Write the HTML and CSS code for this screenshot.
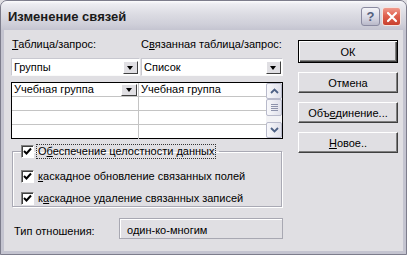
FILE: index.html
```html
<!DOCTYPE html>
<html lang="ru">
<head>
    <meta charset="UTF-8">
    <title>Изменение связей</title>
    <link rel="stylesheet" href="styles.css">
</head>
<body>
    <div class="window">
        <div class="titlebar">
            <span class="title">Изменение связей</span>
            <span class="cap-btn help">?</span>
            <span class="cap-btn close">
                <svg width="12" height="12" viewBox="0 0 12 12"><path d="M2 2 L10 10 M10 2 L2 10" stroke="#fff" stroke-width="2.2" stroke-linecap="round"/></svg>
            </span>
        </div>

        <div class="client">
            <div class="main">
                <div class="left">
                    <div class="labels">
                        <span class="lbl-a"><u>Т</u>аблица/запрос:</span>
                        <span>С<u>в</u>язанная таблица/запрос:</span>
                    </div>

                    <div class="combos">
                        <div class="combo c1"><span class="val">Группы</span><span class="drop"></span></div>
                        <div class="combo c2"><span class="val">Список</span><span class="drop"></span></div>
                    </div>

                    <div class="grid">
                        <div class="rows">
                            <div class="row">
                                <div class="cell c-left">Учебная группа<span class="drop small"></span></div>
                                <div class="cell">Учебная группа</div>
                            </div>
                            <div class="row"><div class="cell c-left"></div><div class="cell"></div></div>
                            <div class="row"><div class="cell c-left"></div><div class="cell"></div></div>
                            <div class="row"><div class="cell c-left"></div><div class="cell"></div></div>
                        </div>
                        <div class="scrollbar">
                            <span class="sb-btn"><svg width="9" height="6" viewBox="0 0 9 6"><path d="M1 5 L4.5 1.5 L8 5" fill="none" stroke="#4d6185" stroke-width="1.8"/></svg></span>
                            <span class="sb-thumb"><i></i><i></i><i></i><i></i></span>
                            <span class="sb-track"></span>
                            <span class="sb-btn"><svg width="9" height="6" viewBox="0 0 9 6"><path d="M1 1 L4.5 4.5 L8 1" fill="none" stroke="#4d6185" stroke-width="1.8"/></svg></span>
                        </div>
                    </div>

                    <fieldset class="group">
                        <legend class="check-row">
                            <span class="check"><svg width="9" height="9" viewBox="0 0 9 9"><path d="M1 4 L3.5 6.5 L8 1.5" fill="none" stroke="#000" stroke-width="2"/></svg></span>
                            <span class="focus">О<u>б</u>еспечение целостности данных</span>
                        </legend>
                        <div class="check-row r2">
                            <span class="check"><svg width="9" height="9" viewBox="0 0 9 9"><path d="M1 4 L3.5 6.5 L8 1.5" fill="none" stroke="#000" stroke-width="2"/></svg></span>
                            <span class="text"><u>к</u>аскадное обновление связанных полей</span>
                        </div>
                        <div class="check-row r3">
                            <span class="check"><svg width="9" height="9" viewBox="0 0 9 9"><path d="M1 4 L3.5 6.5 L8 1.5" fill="none" stroke="#000" stroke-width="2"/></svg></span>
                            <span class="text">к<u>а</u>скадное удаление связанных записей</span>
                        </div>
                    </fieldset>
                </div>

                <div class="buttons">
                    <button class="btn default">ОК</button>
                    <button class="btn">Отмена</button>
                    <button class="btn">Объ<u>е</u>динение...</button>
                    <button class="btn"><u>Н</u>овое..</button>
                </div>
            </div>

            <div class="reltype">
                <span class="rel-label">Тип отношения:</span>
                <div class="rel-field">один-ко-многим</div>
            </div>
        </div>
    </div>
</body>
</html>
```

FILE: styles.css
```css
body { margin: 0; font-family: "Liberation Sans", Arial, sans-serif; font-size: 11px; color: #000; background: #e0dfe3; }
u { text-decoration: underline; text-underline-offset: 1px; }

.window { width: 407px; height: 255px; box-sizing: border-box; display: flex; flex-direction: column; background: #c4c4d0; border: 1px solid #7d7d8c; border-radius: 7px 7px 0 0; overflow: hidden; }

.titlebar { height: 29px; flex: none; display: flex; align-items: center; padding: 0 5px 0 7px; background: linear-gradient(#fdfdfe 0, #ececf1 3px, #dcdce3 45%, #cfcfd9 80%, #c4c4d0 100%); }
.title { flex: 1; font-size: 13px; font-weight: bold; color: #1a1a1a; padding-top: 1px; }
.cap-btn { width: 19px; height: 19px; box-sizing: border-box; border-radius: 3px; display: flex; align-items: center; justify-content: center; margin-left: 2px; margin-top: 2px; }
.help { background: linear-gradient(#f4f4f8, #d6d6e2 60%, #b9b9c9); border: 1px solid #8a8aa0; color: #54607e; font-weight: bold; font-size: 13px; }
.close { background: linear-gradient(#f09a8c, #e0604e 45%, #c8402e); border: 1px solid #f4e4e0; }

.client { flex: 1; margin: 0 3px 3px; background: #e0dfe3; padding: 7px 5px 0 7px; box-sizing: border-box; }
.main { display: flex; gap: 15px; }
.left { width: 272px; }

.labels { display: flex; height: 14px; line-height: 14px; }
.lbl-a { width: 129px; padding-left: 1px; }

.combos { display: flex; gap: 1px; margin-top: 7px; }
.combo { height: 18px; box-sizing: border-box; background: #fff; border: 1px solid; border-color: #c8c8d0 #fafafa #fafafa #c8c8d0; display: flex; align-items: center; }
.c1 { width: 129px; }
.c2 { width: 142px; }
.val { flex: 1; padding-left: 2px; }
.drop { width: 15px; height: 13px; box-sizing: border-box; margin-right: 1px; background: #e0dfe3; border: 1px solid; border-color: #fff #404040 #404040 #fff; position: relative; }
.drop::after { content: ""; position: absolute; left: 3px; top: 4px; border-left: 3.5px solid transparent; border-right: 3.5px solid transparent; border-top: 4px solid #000; }
.drop.small { width: 16px; height: 12px; margin-left: auto; margin-right: 1px; }
.drop.small::after { left: 4px; top: 3px; }

.grid { display: flex; margin-top: 6px; height: 57px; box-sizing: border-box; border: 1px solid #000; background: #fff; }
.rows { flex: 1; }
.row { display: flex; height: 14px; box-sizing: border-box; border-bottom: 1px solid #c4c4c4; }
.row:last-child { border-bottom: 0; }
.cell { flex: 1; padding-left: 2px; line-height: 13px; display: flex; align-items: center; }
.c-left { flex: none; width: 124px; border-right: 1px solid #c4c4c4; }

.scrollbar { width: 16px; display: flex; flex-direction: column; background: #f2f2f5; }
.sb-btn, .sb-thumb { height: 16px; box-sizing: border-box; border: 1px solid #b8bacb; border-radius: 2px; background: linear-gradient(90deg, #f8f8fb, #dfe0ea); display: flex; align-items: center; justify-content: center; }
.sb-thumb { flex-direction: column; gap: 1px; height: 17px; }
.sb-thumb i { display: block; width: 7px; height: 1px; background: #8d92ab; }
.sb-track { flex: 1; }

.group { margin: 4px 1px 0 1px; padding: 0 0 0 8px; border: 1px solid #a9a9b4; box-shadow: inset 1px 1px #fff, 1px 1px #fff; }
.check-row { display: flex; align-items: center; height: 16px; padding: 0 3px 0 0; }
.check { width: 13px; height: 13px; box-sizing: border-box; background: #fff; border: 1px solid; border-color: #808080 #fff #fff #808080; box-shadow: inset 1px 1px #404040; display: flex; align-items: center; justify-content: center; }
.focus { margin-left: 2px; padding: 0 1px; border: 1px dotted #333; line-height: 13px; }
.text { margin-left: 4px; }
.r2 { margin-top: 9px; }
.r3 { margin-top: 6px; }

.buttons { display: flex; flex-direction: column; width: 100px; padding-top: 3px; }
.btn { font: inherit; height: 21px; margin-bottom: 9px; padding: 0; background: #e0dfe3; border: 1px solid; border-color: #fff #404040 #404040 #fff; box-shadow: inset -1px -1px #808080; color: #000; }
.btn.default { height: 23px; margin-bottom: 9px; outline: none; border: 1px solid #000; box-shadow: inset 1px 1px #fff, inset -1px -1px #404040, inset -2px -2px #808080; }

.reltype { display: flex; align-items: center; margin-top: 11px; padding-left: 3px; }
.rel-label { width: 105px; padding-top: 5px; }
.rel-field { width: 164px; height: 21px; box-sizing: border-box; border: 1px solid #a8a8b2; box-shadow: inset 1px 1px #fff; padding: 4px 0 0 7px; line-height: 14px; }
```
